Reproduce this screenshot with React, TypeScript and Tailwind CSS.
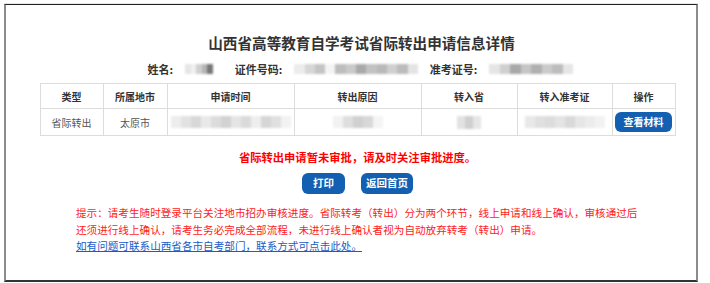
import React from "react";

const FONT = '"Noto Sans CJK SC", "Noto Sans", sans-serif';

function Redact({ shades, seg, h }: { shades: string[]; seg: number; h: number }) {
  return (
    <div className="flex blur-[1.2px]">
      {shades.map((c, i) => (
        <div key={i} style={{ background: c, width: seg, height: h }} />
      ))}
    </div>
  );
}

const Btn = ({ children, w }: { children: React.ReactNode; w: string }) => (
  <button
    className={`h-[21px] ${w} rounded-[6px] bg-[#135fb2] text-white text-[10.5px] font-bold leading-none flex items-center justify-center`}
  >
    {children}
  </button>
);

export default function App() {
  const th = "border border-[#dcdcdc] font-bold text-[10px] text-[#333] h-[25px] text-center align-middle";
  const td = "border border-[#dcdcdc] text-[10px] text-[#555] h-[27px] text-center align-middle";
  return (
    <div className="w-[710px] h-[283px] bg-white pt-[3px] pl-[4px]" style={{ fontFamily: FONT }}>
      <div className="w-[694px] h-[279px] border-t border-t-[#e6e6e6]">
        <div className="w-full h-[278px] border-t border-t-[#222] border-l-2 border-l-[#8c8c8c] border-r-2 border-r-[#8c8c8c] border-b-2 border-b-[#333]">
          <div className="w-[635px] ml-[34px] flex flex-col items-center">
            <div className="mt-[28px] h-[20px] leading-[20px] text-[14.6px] font-bold text-[#333] ml-[8px]">
              山西省高等教育自学考试省际转出申请信息详情
            </div>
            <div className="mt-[8px] h-[16px] flex items-center text-[11px] font-bold text-[#333] ml-[6px]">
              <span>姓名:</span>
              <div className="ml-[12px]">
                <Redact shades={["#e6e6e6", "#f0f0f0", "#d0d0d0", "#b5b5b5", "#777"]} seg={5.5} h={10} />
              </div>
              <span className="ml-[22px]">证件号码:</span>
              <div className="ml-[12px]">
                <Redact
                  shades={["#ececec", "#d6d6d6", "#c4c4c4", "#f4f4f4", "#bdbdbd", "#c9c9c9", "#a9a9a9", "#c2c2c2", "#b9b9b9", "#cfcfcf", "#bcbcbc", "#e4e4e4"]}
                  seg={10.3}
                  h={10}
                />
              </div>
              <span className="ml-[12px]">准考证号:</span>
              <div className="ml-[12px]">
                <Redact
                  shades={["#e5e5e5", "#cfcfcf", "#a8a8a8", "#c6c6c6", "#b0b0b0", "#cbcbcb", "#bdbdbd", "#e6e6e6"]}
                  seg={10.5}
                  h={10}
                />
              </div>
            </div>
            <table className="mt-[6px] w-[635px] table-fixed border-collapse">
              <colgroup>
                <col className="w-[63px]" />
                <col className="w-[64px]" />
                <col className="w-[127px]" />
                <col className="w-[127px]" />
                <col className="w-[96px]" />
                <col className="w-[95px]" />
                <col className="w-[63px]" />
              </colgroup>
              <thead>
                <tr>
                  <th className={th}>类型</th>
                  <th className={th}>所属地市</th>
                  <th className={th}>申请时间</th>
                  <th className={th}>转出原因</th>
                  <th className={th}>转入省</th>
                  <th className={th}>转入准考证</th>
                  <th className={th}>操作</th>
                </tr>
              </thead>
              <tbody>
                <tr>
                  <td className={td}>省际转出</td>
                  <td className={td}>太原市</td>
                  <td className={td}>
                    <div className="flex justify-center">
                      <Redact
                        shades={["#ededed", "#e2e2e2", "#d8d8d8", "#e9e9e9", "#dcdcdc", "#d2d2d2", "#e5e5e5", "#dadada", "#eeeeee", "#d6d6d6", "#e0e0e0", "#f2f2f2"]}
                        seg={10}
                        h={12}
                      />
                    </div>
                  </td>
                  <td className={td}>
                    <div className="flex justify-center">
                      <Redact shades={["#f2f2f2", "#dedede", "#d0d0d0", "#d8d8d8", "#f4f4f4"]} seg={10} h={12} />
                    </div>
                  </td>
                  <td className={td}>
                    <div className="flex justify-center">
                      <Redact shades={["#e2e2e2", "#cfcfcf", "#e6e6e6"]} seg={8} h={13} />
                    </div>
                  </td>
                  <td className={td}>
                    <div className="flex justify-center">
                      <Redact
                        shades={["#e8e8e8", "#e0e0e0", "#dcdcdc", "#e4e4e4", "#d9d9d9", "#e6e6e6", "#ececec", "#f2f2f2"]}
                        seg={10}
                        h={12}
                      />
                    </div>
                  </td>
                  <td className={td}>
                    <div className="flex justify-center">
                      <button className="w-[57px] h-[20px] rounded-[6px] bg-[#135fb2] text-white text-[10px] font-bold leading-none">
                        查看材料
                      </button>
                    </div>
                  </td>
                </tr>
              </tbody>
            </table>
            <div className="mt-[13px] h-[16px] leading-[16px] text-[11.3px] font-bold text-[#ff0000]">
              省际转出申请暂未审批，请及时关注审批进度。
            </div>
            <div className="mt-[8px] flex gap-[16px]">
              <Btn w="w-[43px]">打印</Btn>
              <Btn w="w-[52px]">返回首页</Btn>
            </div>
            <div className="self-start ml-[36px] mt-[11px] text-[10.6px] leading-[16.5px] text-[#ff1a1a]">
              <div>提示：请考生随时登录平台关注地市招办审核进度。省际转考（转出）分为两个环节，线上申请和线上确认，审核通过后</div>
              <div>还须进行线上确认，请考生务必完成全部流程，未进行线上确认者视为自动放弃转考（转出）申请。</div>
              <div>
                <a href="#" className="text-[#1a5bc4] underline">
                  如有问题可联系山西省各市自考部门，联系方式可点击此处。
                </a>
              </div>
            </div>
          </div>
        </div>
      </div>
    </div>
  );
}
